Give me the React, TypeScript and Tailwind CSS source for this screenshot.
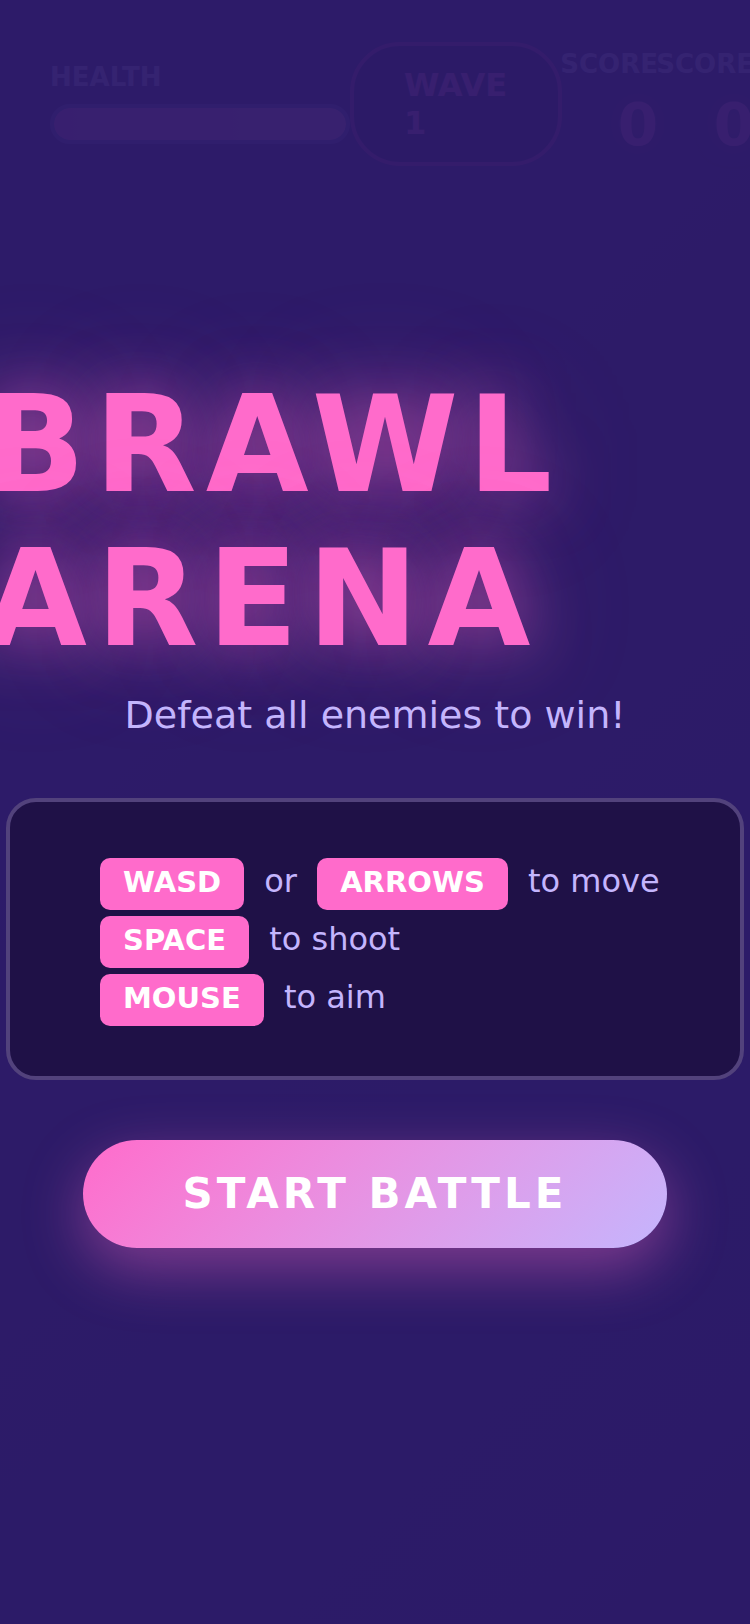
import { ReactNode } from "react";

interface IStat {
  id: string;
  label: string;
  value: number;
}

const stats: IStat[] = [
  { id: "score", label: "SCORE", value: 0 },
  { id: "best", label: "SCORE", value: 0 },
];

function Key({ children }: { children: ReactNode }) {
  return (
    <kbd className="mx-[10px] rounded-[10px] bg-[#ff6bcb] px-[23px] pt-[7px] pb-[11px] font-['DejaVu_Sans',sans-serif] text-[29px] leading-none font-bold text-white">
      {children}
    </kbd>
  );
}

// Health, wave and score, dimmed by the start screen
function Hud({ health }: { health: number }) {
  return (
    <header className="flex items-center pt-[42px] pl-[50px] font-bold">
      <div className="flex w-[300px] shrink-0 flex-col gap-3 pb-0.5">
        <span className="text-[26px] leading-[30px] text-[#c4b5fd]">HEALTH</span>
        <div className="h-10 overflow-hidden rounded-full border-4 border-[#6058b0] bg-[#6058b0]">
          <div
            className="h-full rounded-full bg-linear-to-r from-[#ff6bcb] to-[#ff8bcb]"
            style={{ width: `${health}%` }}
          />
        </div>
      </div>
      <div className="w-[212px] shrink-0 rounded-[50px] border-4 border-[#b02a88] bg-[#1f1147] px-[50px] py-5 text-[32px] leading-[38px] text-[#ff6bcb]">
        WAVE 1
      </div>
      {stats.map(({ id, label, value }) => (
        <div key={id} className="flex w-24 shrink-0 flex-col items-end gap-3">
          <span className="text-[26px] leading-[30px] text-[#c4b5fd]">{label}</span>
          <span className="text-[58px] leading-[68px] text-[#ff6bcb] [text-shadow:0_0_20px_#ff6bcb80]">{value}</span>
        </div>
      ))}
    </header>
  );
}

function StartScreen() {
  return (
    <main className="absolute inset-0 flex flex-col items-center justify-center bg-[#2d1b69]/95 px-[6px] pb-2">
      <h1 className="-ml-11 w-full text-[133px] leading-[154px] font-bold tracking-[9px] text-[#ff6bcb] [text-shadow:0_0_60px_#ff6bcb80,0_0_120px_#ff6bcb4d]">
        BRAWL ARENA
      </h1>
      <p className="mt-4 text-[38px] leading-[46px] text-[#c4b5fd]">Defeat all enemies to win!</p>
      <div className="mt-[60px] w-full rounded-[30px] border-4 border-[#52427c] bg-[#1f1147] px-20 py-[50px] text-[32px] leading-[58px] text-[#c4b5fd]">
        <p>
          <Key>WASD</Key> or <Key>ARROWS</Key> to move
        </p>
        <p>
          <Key>SPACE</Key> to shoot
        </p>
        <p>
          <Key>MOUSE</Key> to aim
        </p>
      </div>
      <button
        type="button"
        className="mt-[60px] cursor-pointer rounded-full bg-linear-135 from-[#ff6bcb] to-[#c4b5fd] px-[100px] py-[30px] text-[42px] leading-[48px] font-bold tracking-[4px] text-white shadow-[0_20px_60px_#ff6bcb66]"
      >
        START BATTLE
      </button>
    </main>
  );
}

function App() {
  return (
    <div className="relative min-h-screen overflow-hidden bg-linear-135 from-[#2d1b69] to-[#1f1147] font-['DejaVu_Sans',sans-serif]">
      <Hud health={100} />
      <StartScreen />
    </div>
  );
}

export default App;
